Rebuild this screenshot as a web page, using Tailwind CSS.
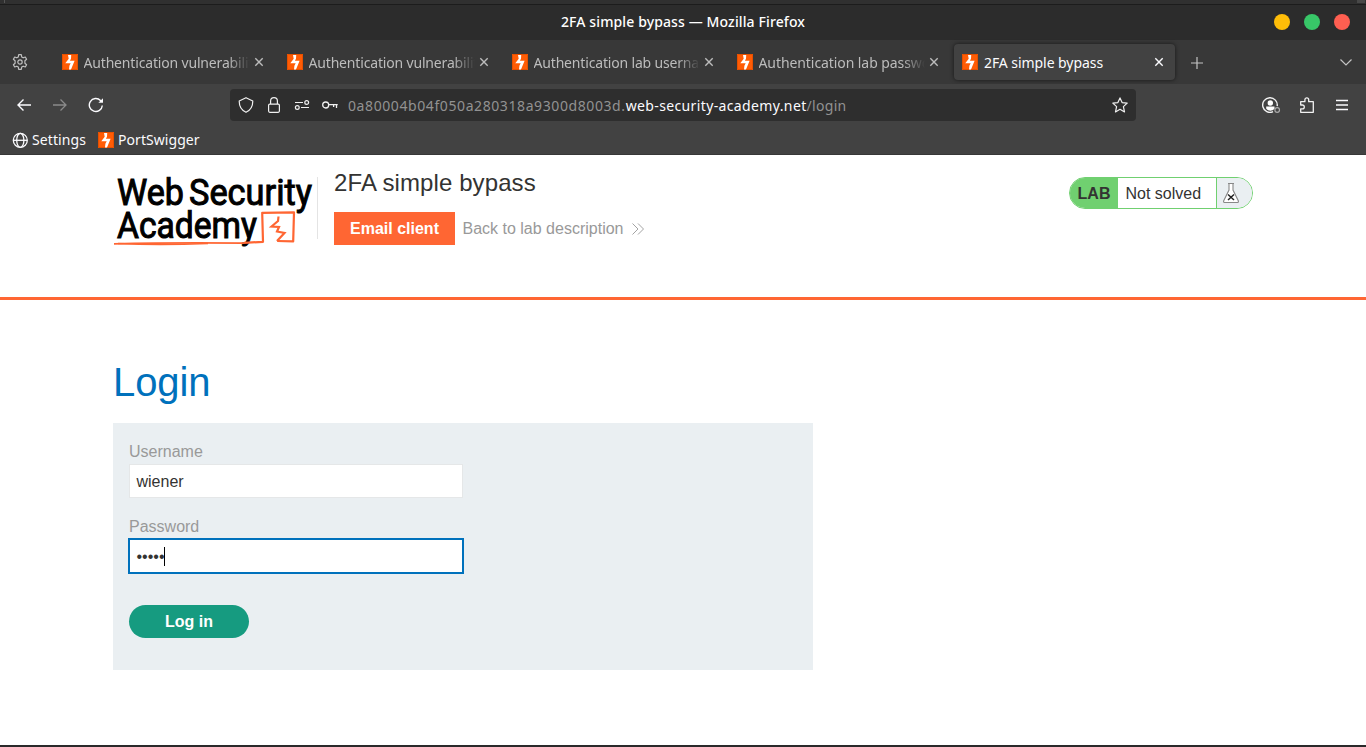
<!DOCTYPE html>
<html lang="en">
<head>
<meta charset="utf-8">
<title>2FA simple bypass</title>
<script src="https://cdn.jsdelivr.net/npm/@tailwindcss/browser@4"></script>
</head>
<body class="h-[747px] w-[1366px] overflow-hidden bg-white flex flex-col font-['Liberation_Sans',sans-serif] text-base text-[#333332]">
<svg class="hidden">
  <symbol id="bolt" viewBox="0 0 16 16"><rect width="16" height="16" fill="#ff5c05"/><path d="M.5.5h15v15H.5z" fill="none" stroke="#e65000" stroke-width="1"/><path d="M6 1h3.200l-.2 3.700-1.100 2h4.700L9 15.500H7l.4-3.800 1.300-2.400H3.300L6.700 4.800z" fill="#fff"/></symbol>
  <symbol id="close" viewBox="0 0 10 10"><path d="M1.300 1.300l7.400 7.400M8.700 1.300L1.300 8.700" fill="none" stroke="currentColor" stroke-width="1.400"/></symbol>
</svg>

<div class="flex h-[155px] shrink-0 flex-col font-['Noto_Sans',sans-serif] text-[14px]">
  <div class="flex h-[5px] shrink-0 justify-between border-b border-[#1c1c1c] bg-[#303030]"><span class="ml-1 h-[3px] w-px bg-[#555]"></span><span class="mr-px h-[3px] w-2 bg-[#484848]"></span></div>
  <div class="grid h-[35px] shrink-0 grid-cols-[1fr_auto_1fr] items-center bg-[#2c2c2c]">
    <span></span>
    <span class="pb-0.5 text-[14px] font-medium leading-5 tracking-[0.12px] text-white">2FA simple bypass — Mozilla Firefox</span>
    <div class="flex justify-end gap-3.5 pr-4 pb-px">
      <span class="size-4 rounded-full bg-[#ffbd08]"></span><span class="size-4 rounded-full bg-[#38c768]"></span><span class="size-4 rounded-full bg-[#ff5f51]"></span>
    </div>
  </div>

  <div class="flex h-11 shrink-0 items-center bg-[#383838] text-[#bcbcbc]">
    <svg class="ml-3 mr-[26px] size-4 shrink-0" viewBox="0 0 16 16" fill="none" stroke="#c0c0c0" stroke-width="1.200" stroke-linejoin="round"><path d="M6.700.700h2.600l.4 2.200 1.500.9 2.100-.8 1.300 2.300L12.900 6.800v2.400l1.700 1.500-1.300 2.300-2.100-.8-1.500.9-.4 2.200H6.700l-.4-2.200-1.500-.9-2.100.8-1.300-2.300 1.700-1.500V6.800L1.400 5.300 2.700 3l2.100.8 1.500-.9z"/><circle cx="8" cy="8" r="2.200"/></svg>
    <div class="flex gap-1">
      <div class="flex h-9 w-[221px] items-center pl-2"><svg class="size-4 shrink-0"><use href="#bolt"/></svg><span class="ml-[5.500px] w-[166.500px] overflow-hidden whitespace-nowrap tracking-[-0.17px] [mask-image:linear-gradient(to_left,transparent,black_22px)]">Authentication vulnerabilities</span><svg class="ml-1 size-[10px]"><use href="#close"/></svg></div>
      <div class="flex h-9 w-[221px] items-center pl-2"><svg class="size-4 shrink-0"><use href="#bolt"/></svg><span class="ml-[5.500px] w-[166.500px] overflow-hidden whitespace-nowrap tracking-[-0.17px] [mask-image:linear-gradient(to_left,transparent,black_22px)]">Authentication vulnerabilities</span><svg class="ml-1 size-[10px]"><use href="#close"/></svg></div>
      <div class="flex h-9 w-[221px] items-center pl-2"><svg class="size-4 shrink-0"><use href="#bolt"/></svg><span class="ml-[5.500px] w-[166.500px] overflow-hidden whitespace-nowrap tracking-[-0.17px] [mask-image:linear-gradient(to_left,transparent,black_22px)]">Authentication lab usernames</span><svg class="ml-1 size-[10px]"><use href="#close"/></svg></div>
      <div class="flex h-9 w-[221px] items-center pl-2"><svg class="size-4 shrink-0"><use href="#bolt"/></svg><span class="ml-[5.500px] w-[166.500px] overflow-hidden whitespace-nowrap tracking-[-0.08px] [mask-image:linear-gradient(to_left,transparent,black_22px)]">Authentication lab passwords</span><svg class="ml-1 size-[10px]"><use href="#close"/></svg></div>
      <div class="flex h-9 w-[221px] items-center rounded bg-[#424242] pl-2 text-[#fbfbfe] shadow-[0_0_4px_rgba(0,0,0,0.6)]"><svg class="size-4 shrink-0"><use href="#bolt"/></svg><span class="ml-[6px] w-[166px] whitespace-nowrap tracking-[-0.06px]">2FA simple bypass</span><svg class="ml-1 size-[10px]"><use href="#close"/></svg></div>
    </div>
    <svg class="ml-4 mt-px size-3" viewBox="0 0 12 12" stroke="#c4c4c4" stroke-width="1.200"><path d="M6 0v12M0 6h12"/></svg>
    <svg class="ml-auto mr-[14px] h-[7px] w-3" viewBox="0 0 12 7" fill="none" stroke="#c4c4c4" stroke-width="1.200"><path d="M.5.500L6 6l5.500-5.500"/></svg>
  </div>

  <div class="flex h-[42px] shrink-0 items-center bg-[#424242]">
    <svg class="ml-[17px] h-3 w-[14px]" viewBox="0 0 14 12" fill="none" stroke="#fbfbfe" stroke-width="1.400"><path d="M14 6H1M6.500.5L1 6l5.500 5.500"/></svg>
    <svg class="ml-[22px] h-3 w-[14px]" viewBox="0 0 14 12" fill="none" stroke="#8a8a8a" stroke-width="1.300"><path d="M0 6h13M7.500.5L13 6l-5.500 5.500"/></svg>
    <svg class="ml-[21px] size-4" viewBox="0 0 16 16" fill="none" stroke="#fbfbfe" stroke-width="1.400"><path d="M14.300 8.500A6.500 6.500 0 1 1 12.500 3.500l1 1"/><path d="M15 1.200v4.600h-4.600z" fill="#fbfbfe" stroke="none"/></svg>
    <div class="ml-[126px] flex h-8 w-[906px] items-center rounded bg-[#2e2e2e] pl-2 pr-2 text-[#929292]">
      <svg class="size-4" viewBox="0 0 16 16" fill="none" stroke="#f0f0f0" stroke-width="1.200" stroke-linejoin="round"><path d="M8 .700L14.800 4c0 5-1.800 9-6.800 11.300C3 13 1.200 9 1.200 4z"/></svg>
      <svg class="ml-3 size-4" viewBox="0 0 16 16" fill="none" stroke="#f0f0f0" stroke-width="1.200"><rect x="2.600" y="7.100" width="10.800" height="8.200" rx="1.200"/><path d="M4.600 7V4a3.400 3.400 0 0 1 6.800 0v3"/></svg>
      <svg class="ml-3 size-4" viewBox="0 0 16 16" fill="none" stroke="#f0f0f0" stroke-width="1.200"><path d="M1 5.500h8M7 10.500h8"/><circle cx="12.700" cy="5.500" r="1.900"/><circle cx="3.300" cy="10.500" r="1.900"/></svg>
      <svg class="ml-3 size-4" viewBox="0 0 16 16" fill="none" stroke="#f0f0f0" stroke-width="1.300"><circle cx="3.700" cy="8" r="3"/><path d="M6.700 7.700h9M14.500 8v3M11.600 8v2"/></svg>
      <span class="ml-[10px] whitespace-nowrap text-[14px]"><span class="tracking-[0.59px]">0a80004b04f050a280318a9300d8003d.</span><span class="text-[#fbfbfe] tracking-[0.37px]">web-security-academy.net</span><span class="tracking-[0.3px]">/login</span></span>
      <svg class="ml-auto size-4 shrink-0" viewBox="0 0 16 16" fill="none" stroke="#f0f0f0" stroke-width="1.200" stroke-linejoin="round"><path d="M8 .9l2.100 4.700 5.100.5-3.800 3.500 1.100 5.300L8 12.300l-4.500 2.600 1.100-5.300L.8 6.100l5.100-.5z"/></svg>
    </div>
    <svg class="ml-[126px] h-4 w-[19px]" viewBox="0 0 19 16" fill="none"><path d="M15.200 9.100A7.300 7.300 0 1 0 11 14.700" stroke="#f2f2f2" stroke-width="1.400"/><circle cx="8.300" cy="6" r="2.700" fill="#fff"/><path d="M4.200 9.500h8.300v2.300c-2 2.500-6.300 2.500-8.300 0z" fill="#fff"/><circle cx="15.200" cy="13" r="2.300" stroke="#aaa" stroke-width="1.200"/></svg>
    <svg class="ml-[18px] size-4" viewBox="0 0 16 16" fill="none" stroke="#f2f2f2" stroke-width="1.300" stroke-linejoin="round"><path d="M1.700 6.500V4.700h4.200V2.800a1.900 1.900 0 0 1 3.800 0v1.900h4.600v10.600H1.700v-3.500h1.700a1.900 1.900 0 0 0 0-3.800H1.700z"/></svg>
    <svg class="ml-[21px] size-3" viewBox="0 0 12 12" stroke="#fbfbfe" stroke-width="1.300"><path d="M0 1.500h12M0 6h12M0 10.500h12"/></svg>
  </div>

  <div class="flex h-[29px] items-center border-b border-[#373737] bg-[#424242] pl-3 text-[#fbfbfe]">
    <svg class="size-4" viewBox="0 0 16 16" fill="none" stroke="#fbfbfe" stroke-width="1.300"><circle cx="8.300" cy="8.300" r="7"/><ellipse cx="8.300" cy="8.300" rx="3.600" ry="7"/><path d="M1 8.300h14"/></svg>
    <span class="ml-1 w-[66px] whitespace-nowrap pb-0.5 tracking-[0.1px]">Settings</span>
    <svg class="size-4"><use href="#bolt"/></svg>
    <span class="ml-1 whitespace-nowrap pb-0.5 tracking-[0.06px]">PortSwigger</span>
  </div>
</div>

<header class="flex h-[145px] shrink-0 items-start border-b-3 border-[#ff6633] pl-[113px] pr-[113px]">
  <svg class="mt-[18px] h-[76px] w-[204px] shrink-0" viewBox="113 173 204 76" fill="none">
    <g font-family="Roboto" font-size="36" fill="#000" stroke="#000" stroke-width="1">
      <text x="117" y="205" textLength="67" lengthAdjust="spacingAndGlyphs">Web</text>
      <text x="189" y="205" textLength="123" lengthAdjust="spacingAndGlyphs">Security</text>
      <text x="117" y="238" textLength="140" lengthAdjust="spacingAndGlyphs">Academy</text>
    </g>
    <path d="M114 243.800q60-1.500 130-.7" stroke="#ff6633" stroke-width="1.800"/>
    <path d="M118 243.500q40 2 90 0" stroke="#ff6633" stroke-width="1.600"/>
    <path d="M244 242.800l19-1-.8-29 31.800-.4-.8 29-16-.4" stroke="#ff6633" stroke-width="2.200" stroke-linejoin="round"/>
    <path d="M278.500 216.500l-.5 4.500-6.500 5.500 7.500.5-2 4.500 7.500 1.500-7.500 8" stroke="#ff6633" stroke-width="2.200"/>
  </svg>
  <div class="mt-[22px] h-[62px] w-px bg-[#e4e4e4]"></div>
  <div class="ml-4 mt-[14px]">
    <h2 class="text-2xl leading-7 tracking-[0.1px]">2FA simple bypass</h2>
    <div class="mt-[15px] flex items-center">
      <a class="flex h-[33px] w-[121px] items-center justify-center bg-[#ff6633] font-bold text-white">Email client</a>
      <a class="ml-[7.500px] flex items-center text-[#999]">Back to lab description<svg class="ml-[8.500px] h-3 w-3" viewBox="0 0 12 12" fill="none" stroke="#999" stroke-width=".9"><path d="M.5.500L6 6 .5 11.500M6 .500L11.500 6 6 11.500"/></svg></a>
    </div>
  </div>
  <div class="ml-auto mt-[22px] flex h-8 w-[184px] overflow-hidden rounded-full border border-[#70d070] bg-white">
    <span class="flex w-12 items-center justify-center bg-[#70d070] pt-0.5 font-bold">LAB</span>
    <span class="flex w-[98px] items-center pl-[7.500px] pt-0.5">Not solved</span>
    <span class="flex grow items-center border-l border-[#70d070] bg-[#eaeff2] pl-[6px]">
      <svg class="h-5 w-4" viewBox="0 0 16 20" fill="none" stroke="#888"><path d="M5 .500h6M6 1v6L.600 18q-.2 1.500 1 1.500h12.800q1.200 0 1-1.500L10 7V1" fill="#fff" stroke-width="1.100"/><path d="M5 11.500l6 5.500M11 11.500L5 17" stroke="#222" stroke-width="1.500"/></svg>
    </span>
  </div>
</header>

<main class="grow pl-[113px] pt-[59px]">
  <h1 class="text-[40px] leading-[46px] tracking-[-0.1px] text-[#0071bc]">Login</h1>
  <form class="mt-[18px] h-[247px] w-[700px] bg-[#eaeff2] pl-4 pt-[19px]">
    <label class="block h-[22px] leading-[19px] text-[#999]">Username</label>
    <div class="flex h-[34px] w-[334px] items-center border border-[#e5e7e8] bg-white pl-[6.500px] pt-0.5">wiener</div>
    <label class="mt-[19px] block h-[21px] leading-[19px] text-[#999]">Password</label>
    <div class="-ml-px flex h-9 w-[336px] items-center border-2 border-[#0071bc] bg-white pl-[6.500px]"><span class="pt-0.5">•••••</span><span class="-ml-px h-[19px] w-px bg-black"></span></div>
    <button type="button" class="mt-[31px] flex h-[33px] w-[120px] items-center justify-center rounded-full bg-[#169b80] font-bold text-white">Log in</button>
  </form>
</main>
<div class="h-0.5 shrink-0 bg-[#2a292a]"></div>
</body>
</html>
